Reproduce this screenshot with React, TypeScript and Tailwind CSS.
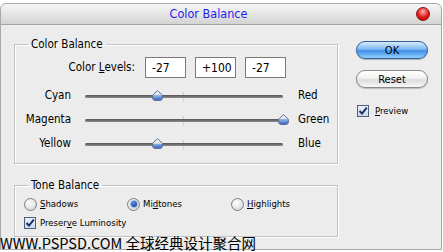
import React from 'react';

const ui = "font-['DejaVu_Sans_Condensed','DejaVu_Sans',sans-serif]";

function Thumb() {
  return (
    <svg width="11" height="11" viewBox="0 0 11 11">
      <defs>
        <linearGradient id="thumbFill" x1="0" y1="0" x2="0" y2="1">
          <stop offset="0" stopColor="#fafafa" />
          <stop offset="0.5" stopColor="#d6dbe2" />
          <stop offset="0.5" stopColor="#8fb6ea" />
          <stop offset="1" stopColor="#2f62bf" />
        </linearGradient>
      </defs>
      <path
        d="M5.5 0.6 L10.4 5.2 L10.4 8 Q10.4 10.4 8 10.4 L3 10.4 Q0.6 10.4 0.6 8 L0.6 5.2 Z"
        fill="url(#thumbFill)"
        stroke="#56698a"
        strokeWidth="0.9"
      />
    </svg>
  );
}

function Slider({ value }: { value: number }) {
  const x = ((value + 100) / 200) * 198;
  return (
    <div className="relative w-[198px] h-[14px]">
      <div className="absolute left-[98px] top-[3px] h-[9px] w-px bg-[#cfcfcf]" />
      <div className="absolute left-0 right-0 top-[6px] h-[3px] rounded-full bg-[linear-gradient(#555,#8c8c8c)]" />
      <div className="absolute top-[1px]" style={{ left: x - 5.5 }}>
        <Thumb />
      </div>
    </div>
  );
}

function SliderRow({ left, right, value }: { left: string; right: string; value: number }) {
  return (
    <div className="flex items-center h-[24px]">
      <span className="w-[56px] text-right">{left}</span>
      <div className="ml-[14px]">
        <Slider value={value} />
      </div>
      <span className="ml-[15px]">{right}</span>
    </div>
  );
}

function Radio({ checked }: { checked?: boolean }) {
  return (
    <span className="flex items-center justify-center w-[13px] h-[13px] rounded-full border border-[#7d7d7d] bg-[radial-gradient(circle_at_40%_35%,#ffffff,#cfcfcf)]">
      {checked && (
        <span className="w-[6px] h-[6px] rounded-full bg-[radial-gradient(circle_at_40%_35%,#5f8fe0,#0d2f80)] ring-1 ring-[#9fc2f0]" />
      )}
    </span>
  );
}

function Check() {
  return (
    <span className="flex items-center justify-center w-[12px] h-[12px] border border-[#4e5f7c] bg-[linear-gradient(#e9f0f8,#c9d9ec)]">
      <svg width="10" height="10" viewBox="0 0 10 10">
        <path d="M1.5 5 L4 7.6 L8.8 1.6" fill="none" stroke="#1b2e6a" strokeWidth="2" />
      </svg>
    </span>
  );
}

function Field({ value }: { value: string }) {
  return (
    <div className="w-[41px] h-[21px] border border-[#7a7a7a] bg-white flex items-center pl-[6px] text-[12px]">
      {value}
    </div>
  );
}

export default function App() {
  return (
    <div className={`relative w-[443px] h-[252px] bg-white overflow-hidden text-[11.5px] text-black ${ui}`}>
      <div className="mt-[3px] w-[442px] h-[247px] rounded-t-[6px] border border-[#a9a9a9] bg-[#ececec] flex flex-col">
        {/* title bar */}
        <div className="h-[21px] rounded-t-[6px] border-b border-[#a3a3a3] bg-[linear-gradient(#f6f6f6,#d3d3d3)] flex items-center">
          <div className="flex-1 text-center text-[12.5px] text-[#1e1ef0] pt-px">Color Balance</div>
          <div className="mr-[11px] w-[14px] h-[14px] rounded-full border border-[#8a1010] bg-[radial-gradient(circle_at_50%_30%,#ffb0b0,#e01818_55%,#a00000)]" />
        </div>

        <div className="flex pt-[11px]">
          {/* left column */}
          <div className="ml-[13px] w-[324px] flex flex-col">
            <fieldset className="h-[128px] border border-[#c2c2c2] shadow-[inset_1px_1px_0_#fff,1px_1px_0_#fff]">
              <legend className="ml-[13px] px-[3px] text-[11.5px] leading-[16px]">Color Balance</legend>
              <div className="mt-[5px] flex items-center">
                <span className="w-[120px] text-right">
                  Color <span className="underline">L</span>evels:
                </span>
                <div className="ml-[10px] flex gap-[9px]">
                  <Field value="-27" />
                  <Field value="+100" />
                  <Field value="-27" />
                </div>
              </div>
              <div className="mt-[6px]">
                <SliderRow left="Cyan" right="Red" value={-27} />
                <SliderRow left="Magenta" right="Green" value={100} />
                <SliderRow left="Yellow" right="Blue" value={-27} />
              </div>
            </fieldset>

            <fieldset className="mt-[13px] h-[60px] border border-[#c2c2c2] shadow-[inset_1px_1px_0_#fff,1px_1px_0_#fff]">
              <legend className="ml-[13px] px-[3px] text-[11.5px] leading-[16px]">Tone Balance</legend>
              <div className="mt-[3px] pl-[9px] flex items-center h-[16px] text-[9.5px]">
                <label className="w-[103px] flex items-center gap-[3px]">
                  <Radio />
                  <span>
                    <span className="underline">S</span>hadows
                  </span>
                </label>
                <label className="w-[104px] flex items-center gap-[3px]">
                  <Radio checked />
                  <span>
                    Mi<span className="underline">d</span>tones
                  </span>
                </label>
                <label className="flex items-center gap-[3px]">
                  <Radio />
                  <span>
                    <span className="underline">H</span>ighlights
                  </span>
                </label>
              </div>
              <div className="mt-[3px] pl-[9px] flex items-center h-[16px] gap-[4px] text-[9.5px]">
                <Check />
                <span>
                  Preser<span className="underline">v</span>e Luminosity
                </span>
              </div>
            </fieldset>
          </div>

          {/* right column */}
          <div className="ml-[18px] w-[72px] flex flex-col pt-[5px]">
            <button className="h-[18px] rounded-full border border-[#2f5f9f] bg-[linear-gradient(#d6ebff,#7fb8f2_45%,#3f8ee6_55%,#8fd0ff)] text-[11px] leading-none shadow-[0_1px_1px_rgba(0,0,0,0.25)]">
              OK
            </button>
            <button className="mt-[11px] h-[18px] rounded-full border border-[#8a8a8a] bg-[linear-gradient(#ffffff,#f2f2f2_45%,#dcdcdc_55%,#f8f8f8)] text-[11px] leading-none shadow-[0_1px_1px_rgba(0,0,0,0.2)]">
              Reset
            </button>
            <div className="mt-[16px] ml-[1px] flex items-center gap-[6px] text-[9.5px]">
              <Check />
              <span>
                <span className="underline">P</span>review
              </span>
            </div>
          </div>
        </div>
      </div>

      <div className="absolute left-0 top-[234px] text-[14.5px] leading-[18px] font-['Noto_Sans_CJK_SC',sans-serif] text-black">
        WWW.PSPSD.COM 全球经典设计聚合网
      </div>
    </div>
  );
}
